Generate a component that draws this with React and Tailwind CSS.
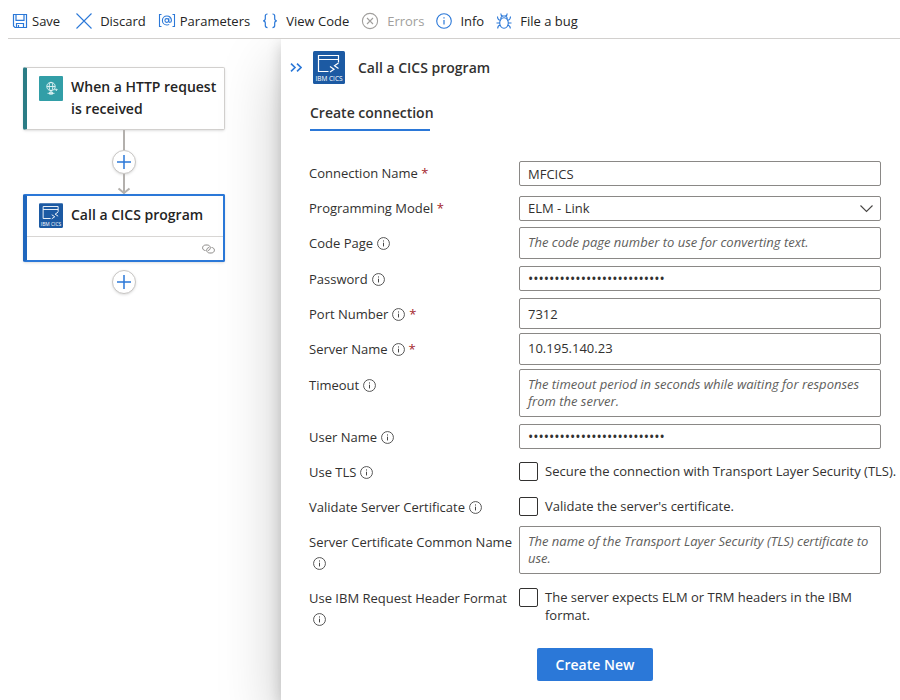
import React from "react";

/* ---------- icons ---------- */

function SaveIcon() {
  return (
    <svg width="16" height="16" viewBox="0 0 16 16" fill="none" stroke="#2b78d8" strokeWidth="1.2" aria-hidden="true">
      <path d="M1.5 1.5h13v13H3L1.5 13z" />
      <path d="M4 1.5v5.8h8V1.5M4.5 14.5v-4h7v4M6.5 12v2.5" />
    </svg>
  );
}

function DiscardIcon() {
  return (
    <svg width="16" height="16" viewBox="0 0 16 16" fill="none" stroke="#2b78d8" strokeWidth="1.1" aria-hidden="true">
      <path d="M0.5 0.5l15 15M15.5 0.5l-15 15" />
    </svg>
  );
}

function ParametersIcon() {
  return (
    <svg width="18" height="16" viewBox="0 0 18 16" fill="none" stroke="#2b78d8" strokeWidth="1.1" aria-hidden="true">
      <path d="M3.500 1.500H1.500v12h2M14.500 1.500h2v12h-2" />
      <circle cx="8.800" cy="7.500" r="1.900" />
      <path d="M10.800 5.300v3c0 1.600 2.600 1.400 2.600-.9 0-2.500-1.900-4.400-4.500-4.400S4.400 5 4.400 7.500s1.900 4.500 4.500 4.500c.9 0 1.700-.2 2.300-.6" />
    </svg>
  );
}

function CodeIcon() {
  return (
    <svg width="16" height="16" viewBox="0 0 16 16" fill="none" stroke="#2b78d8" strokeWidth="1.2" aria-hidden="true">
      <path d="M5.500 1C3.800 1 3.300 1.800 3.300 3v2.600C3.300 7 2.600 7.700 1.200 7.800c1.400.1 2.100.8 2.100 2.200v2.600c0 1.200.5 2 2.200 2" />
      <path d="M10.500 1c1.700 0 2.200.8 2.200 2v2.600c0 1.400.7 2.100 2.100 2.200-1.400.1-2.100.8-2.100 2.200v2.600c0 1.200-.5 2-2.200 2" />
    </svg>
  );
}

function ErrorsIcon() {
  return (
    <svg width="18" height="18" viewBox="0 0 18 18" fill="none" stroke="#a19f9d" strokeWidth="1.1" aria-hidden="true">
      <circle cx="9" cy="9" r="7.600" />
      <path d="M6 6l6 6M12 6l-6 6" />
    </svg>
  );
}

function InfoIcon({ size = 13, color = "#424242" }) {
  return (
    <svg className="inline-block shrink-0" width={size} height={size} viewBox="0 0 16 16" fill="none" stroke={color} strokeWidth="1.1" aria-hidden="true">
      <circle cx="8" cy="8" r="7.300" />
      <path d="M8 7v4.600M8 4.200v1.400" strokeWidth="1.200" />
    </svg>
  );
}

function BugIcon() {
  return (
    <svg width="16" height="16" viewBox="0 0 16 16" fill="none" stroke="#2b78d8" strokeWidth="1.1" aria-hidden="true">
      <ellipse cx="8" cy="10" rx="4.300" ry="5.300" />
      <path d="M4.800 6.300C4.600 4.800 5.400 3.500 6.500 3h3c1.100.5 1.900 1.800 1.700 3.300" />
      <path d="M6.500 3C5.300 2.800 4.800 2 4.800.5M9.500 3c1.200-.2 1.700-1 1.700-2.500" />
      <path d="M4.500 7.300C2.500 7 1.500 6 1.500 3.500M11.500 7.300c2-.3 3-1.300 3-3.800M3.700 10H.5M12.300 10h3.200M4.200 12.300C2.500 12.500 1.700 13.500 1.700 15.500M11.800 12.300c1.700.2 2.500 1.200 2.500 3.200" />
    </svg>
  );
}

function HttpIcon() {
  return (
    <svg width="24" height="25" viewBox="0 0 24 25" fill="none" stroke="#e4f5f6" strokeWidth="0.9" className="shrink-0" aria-hidden="true">
      <rect width="24" height="25" rx="1" fill="#329ea7" stroke="none" />
      <circle cx="12" cy="10.500" r="4.200" />
      <ellipse cx="12" cy="10.500" rx="1.900" ry="4.200" />
      <path d="M7.800 10.500h8.400M12 14.700v3M8.500 17.300h7M10.500 16.200h3v2h-3z" />
      <path d="M15.200 13.700h2.800M17 12.500l1.200 1.200-1.200 1.200" />
    </svg>
  );
}

function CicsIcon({ width, height }) {
  return (
    <svg width={width} height={height} viewBox="0 0 32 33" fill="none" stroke="#ffffff" strokeWidth="1.200" className="shrink-0" aria-hidden="true">
      <rect width="32" height="33" rx="1.500" fill="#1c5aa3" stroke="none" />
      <path d="M15.500 20.500H5.500v-16h20v7M5.500 8.500h20" />
      <path d="M17 15.500l4 2.700-4 2.700M25.500 12l-4 2.700 4 2.700" />
      <text x="16" y="30" textAnchor="middle" fill="#ffffff" stroke="none" fontSize="6.500" fontFamily="'Open Sans', sans-serif">
        IBM CICS
      </text>
    </svg>
  );
}

function LinkIcon() {
  return (
    <svg width="13" height="10" viewBox="0 0 13 10" fill="none" stroke="#8a8886" strokeWidth="1" aria-hidden="true">
      <path d="M3.500 6.500C1.800 6.500.600 5.400.600 3.800S2 1 3.800 1h1.400C7 1 8.300 2.200 8.300 3.800c0 1.500-1 2.500-2.300 2.700" />
      <path d="M9.500 3.500c1.700 0 2.900 1.100 2.900 2.700S11 9 9.200 9H7.800C6 9 4.700 7.800 4.700 6.200c0-1.500 1-2.500 2.300-2.700" />
    </svg>
  );
}

function CollapseIcon() {
  return (
    <svg width="12" height="9" viewBox="0 0 12 9" fill="none" stroke="#2b78d8" strokeWidth="1.600" aria-hidden="true">
      <path d="M1 .7l4 3.800-4 3.800M7 .7l4 3.800-4 3.800" />
    </svg>
  );
}

/* ---------- toolbar ---------- */

function ToolButton({ icon, label, className = "gap-2", disabled = false }) {
  return (
    <button
      type="button"
      disabled={disabled}
      className={`flex items-center whitespace-nowrap text-[13px] leading-5 ${disabled ? "text-[#a19f9d]" : "text-[#242424]"} ${className}`}
    >
      {icon}
      {label}
    </button>
  );
}

function Toolbar() {
  return (
    <header className="ml-2 flex h-[39px] items-center gap-3 border-b border-[#d2d0ce] pt-1 pl-1">
      <ToolButton icon={<SaveIcon />} label="Save" className="mr-1 gap-1" />
      <ToolButton icon={<DiscardIcon />} label="Discard" />
      <ToolButton icon={<ParametersIcon />} label="Parameters" className="gap-1" />
      <ToolButton icon={<CodeIcon />} label="View Code" />
      <ToolButton icon={<ErrorsIcon />} label="Errors" disabled />
      <ToolButton icon={<InfoIcon size={16} color="#2b78d8" />} label="Info" />
      <ToolButton icon={<BugIcon />} label="File a bug" />
    </header>
  );
}

/* ---------- designer canvas ---------- */

function AddButton({ label }) {
  return (
    <button
      type="button"
      aria-label={label}
      className="flex size-6 items-center justify-center rounded-full border border-[#c8c6c4] bg-white shadow-sm"
    >
      <svg width="14" height="14" viewBox="0 0 14 14" stroke="#2b78d8" strokeWidth="1.500" aria-hidden="true">
        <path d="M7 0v14M0 7h14" />
      </svg>
    </button>
  );
}

function Canvas() {
  return (
    <section aria-label="Designer" className="flex w-[281px] shrink-0 flex-col items-center pt-7 pr-[33px]">
      <article className="flex min-h-[63px] w-[202px] gap-2 rounded-xs border border-l-4 border-[#d2d0ce] border-l-[#2b7c85] bg-white py-2 pl-3 shadow">
        <HttpIcon />
        <h2 className="text-sm leading-[22px] font-semibold text-[#242424]">When a HTTP request is received</h2>
      </article>
      <div className="h-5 w-0.5 bg-[#b3b0ad]" />
      <AddButton label="Insert a step between the trigger and the action" />
      <svg width="14" height="20" viewBox="0 0 14 20" fill="none" stroke="#b3b0ad" strokeWidth="2" aria-hidden="true">
        <path d="M7 0v19M1.500 14.500L7 19l5.500-4.500" />
      </svg>
      <article className="w-[202px] rounded-xs border-2 border-l-4 border-[#2b78d8] border-l-[#1f66bd] bg-white shadow">
        <div className="flex h-[41px] gap-2 border-b border-[#d8d6d4] pt-[7px] pl-3">
          <CicsIcon width={24} height={25} />
          <h2 className="whitespace-nowrap text-sm leading-6 font-semibold text-[#242424]">Call a CICS program</h2>
        </div>
        <div className="flex h-[23px] items-center justify-end pr-2">
          <LinkIcon />
        </div>
      </article>
      <div className="pt-2">
        <AddButton label="Add an action" />
      </div>
    </section>
  );
}

/* ---------- connection form ---------- */

const FIELD = "block w-full rounded-xs border border-[#8a8886] bg-white px-2 text-[#323130]";
const AREA = "resize-none overflow-hidden py-[6px] text-[13px] leading-[17px] placeholder:text-[#605e5c] placeholder:italic";

const ROWS = [
  { id: "name", label: "Connection Name", required: true, kind: "input", value: "MFCICS" },
  { id: "model", label: "Programming Model", required: true, kind: "select", value: "ELM - Link" },
  { id: "codepage", label: "Code Page", info: true, kind: "area", hint: "The code page number to use for converting text." },
  { id: "password", label: "Password", info: true, kind: "secret" },
  { id: "port", label: "Port Number", info: true, required: true, kind: "number", value: "7312" },
  { id: "server", label: "Server Name", info: true, required: true, kind: "area", value: "10.195.140.23" },
  { id: "timeout", label: "Timeout", info: true, kind: "tall", hint: "The timeout period in seconds while waiting for responses from the server." },
  { id: "user", label: "User Name", info: true, kind: "secret" },
  { id: "tls", label: "Use TLS", info: true, kind: "check", text: "Secure the connection with Transport Layer Security (TLS)." },
  { id: "validate", label: "Validate Server Certificate", info: true, kind: "check", text: "Validate the server's certificate." },
  { id: "common", label: "Server Certificate Common Name", info: true, kind: "tall", hint: "The name of the Transport Layer Security (TLS) certificate to use." },
  { id: "header", label: "Use IBM Request Header Format", info: true, kind: "check", text: "The server expects ELM or TRM headers in the IBM format." },
];

function Control({ row }) {
  switch (row.kind) {
    case "input":
      return <input id={row.id} type="text" defaultValue={row.value} className={`${FIELD} mt-1 h-[25px] text-[13px]`} />;
    case "number":
      return <input id={row.id} type="text" inputMode="numeric" defaultValue={row.value} className={`${FIELD} h-[31px] text-[13px]`} />;
    case "secret":
      return <input id={row.id} type="password" defaultValue="abcdefghijklmnopqrstuvwxyz" className={`${FIELD} mt-[3px] h-[25px] text-sm`} />;
    case "select":
      return (
        <div className="relative mt-1">
          <select id={row.id} className={`${FIELD} h-[25px] appearance-none text-[13px]`}>
            <option>{row.value}</option>
          </select>
          <svg className="pointer-events-none absolute top-2 right-2" width="13" height="9" viewBox="0 0 13 9" fill="none" stroke="#484644" strokeWidth="1.100" aria-hidden="true">
            <path d="M.5 1.500l6 6 6-6" />
          </svg>
        </div>
      );
    case "area":
      return <textarea id={row.id} rows={1} defaultValue={row.value} placeholder={row.hint} className={`${FIELD} ${AREA} h-8`} />;
    case "tall":
      return <textarea id={row.id} rows={2} placeholder={row.hint} className={`${FIELD} ${AREA} h-12`} />;
    default:
      return (
        <label className="-mr-4 flex items-start gap-[7px] pt-[6px] text-[13px] leading-[18px] text-[#323130]">
          <input
            id={row.id}
            type="checkbox"
            className="size-[19px] shrink-0 appearance-none rounded-xs border border-[#323130] bg-white checked:bg-[#2b78d8]"
          />
          <span>{row.text}</span>
        </label>
      );
  }
}

function Row({ row }) {
  return (
    <div className="flex min-h-[31px] items-start">
      <div className="w-[210px] shrink-0 pt-1.5 pb-1 text-[13px] leading-[21px] text-[#323130]">
        <label htmlFor={row.id}>{row.label}</label>
        {row.info && (
          <button type="button" aria-label={`About ${row.label}`} className="mx-1 inline-flex align-[-2px]">
            <InfoIcon />
          </button>
        )}
        {row.required && <span className="text-[#a4262c]">{row.info ? "*" : " *"}</span>}
      </div>
      <div className="min-w-0 flex-1">
        <Control row={row} />
      </div>
    </div>
  );
}

function Panel() {
  return (
    <main className="relative min-w-0 flex-1 bg-white pb-[18px] shadow-[0_26px_58px_rgba(0,0,0,0.22),0_5px_14px_rgba(0,0,0,0.18)]">
      <div className="flex items-center pt-3 pl-[9px]">
        <button type="button" aria-label="Collapse panel" className="mr-[11px]">
          <CollapseIcon />
        </button>
        <CicsIcon width={32} height={33} />
        <h1 className="ml-[13px] text-sm leading-5 font-semibold text-[#323130]">Call a CICS program</h1>
      </div>
      <div role="tablist" className="flex pt-4 pl-[29px]">
        <button type="button" role="tab" aria-selected="true" className="h-[31px] w-[120px] border-b-2 border-[#2b78d8] pb-1 text-left text-sm font-semibold whitespace-nowrap text-[#323130]">
          Create connection
        </button>
      </div>
      <form className="flex flex-col gap-1 pt-[26px] pr-[19px] pl-7" onSubmit={(event) => event.preventDefault()}>
        {ROWS.map((row) => (
          <Row key={row.id} row={row} />
        ))}
        <div className="flex justify-center pt-2.5">
          <button type="submit" className="h-[33px] w-[116px] rounded-xs bg-[#2b78d8] text-sm font-semibold text-white">
            Create New
          </button>
        </div>
      </form>
    </main>
  );
}

export default function App() {
  return (
    <div className="flex min-h-screen flex-col overflow-hidden bg-white font-['Open_Sans','Noto_Sans',sans-serif]">
      <Toolbar />
      <div className="flex flex-1 overflow-hidden">
        <Canvas />
        <Panel />
      </div>
    </div>
  );
}
